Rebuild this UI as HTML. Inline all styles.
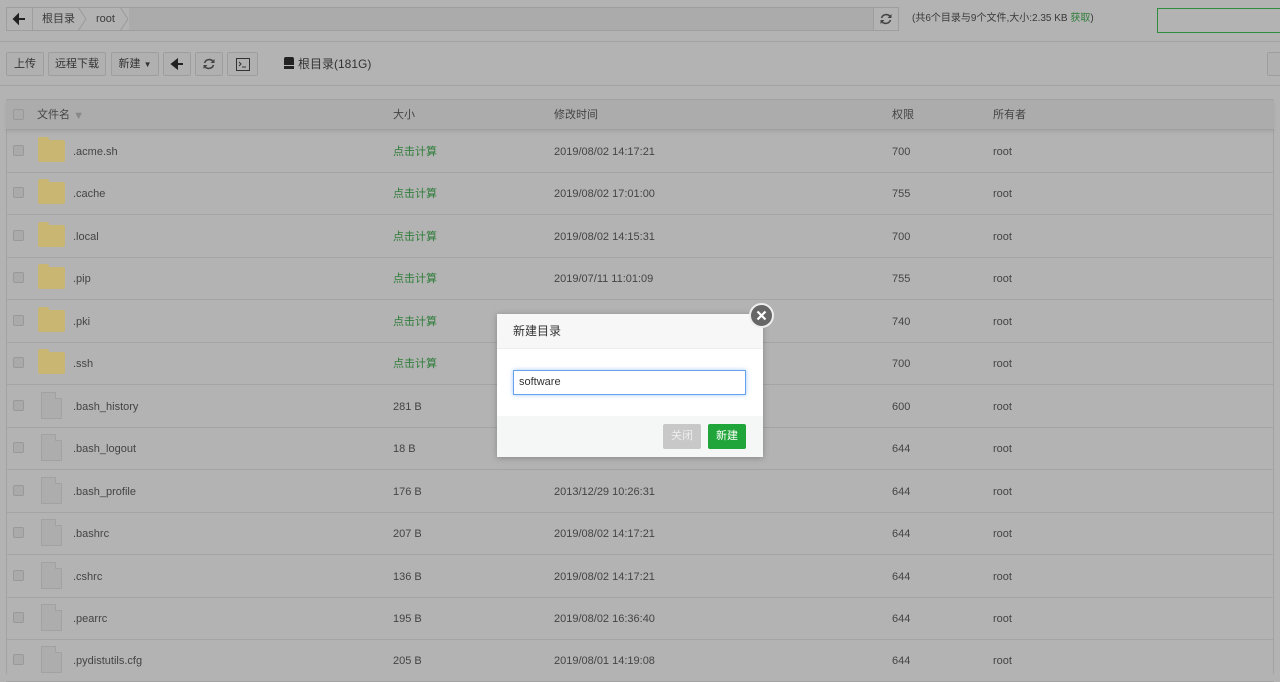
<!DOCTYPE html>
<html style="background:#b3b3b3"><head><meta charset="utf-8">
<style>
*{box-sizing:border-box;margin:0;padding:0}
body{width:1280px;height:674px;overflow:hidden;background:#b3b3b3;font-family:"Liberation Sans","Noto Sans CJK SC",sans-serif;font-size:12px;color:#3a3a3a;position:relative}
.abs{position:absolute}
.btn{position:absolute;top:52px;height:24px;border:1px solid #9e9e9e;border-radius:2px;background:#b0b0b0;font-size:11px;line-height:22px;text-align:center;color:#333}
.hl{position:absolute;left:0;width:1280px;height:1px;background:#a2a2a2}
.row{position:absolute;left:6px;width:1268px;height:43px;border-bottom:1px solid #a4a4a4}
.row span,.hd span{position:absolute;top:1px;line-height:42px;font-size:11px;color:#444}
.cb{position:absolute;left:7px;top:15px;width:11px;height:11px;border:1px solid #999;border-radius:2px;background:#aaa}
.fold{position:absolute;left:32px;top:10px;width:27px;height:22px;background:#c9b673;border-radius:2px}
.fold:before{content:"";position:absolute;left:0;top:-3px;width:11px;height:4px;background:#c9b673;border-radius:2px 2px 0 0}
.file{position:absolute;left:35px;top:7px;width:21px;height:27px;background:#adadad;border:1px solid #a2a2a2}
.file:after{content:"";position:absolute;right:-1px;top:-1px;width:6px;height:6px;background:#b3b3b3;border-left:1px solid #a2a2a2;border-bottom:1px solid #a2a2a2}
.g{color:#2f7d3a!important}
</style></head><body>
<div class="abs" style="left:6px;top:7px;width:893px;height:24px;border:1px solid #9e9e9e;background:#ababab"></div>
<div class="abs" style="left:6px;top:7px;width:27px;height:24px;border:1px solid #9e9e9e;background:#b3b3b3"><svg width="25" height="22"><path d="M7 11h11M7 11l4-4v8z" stroke="#222" stroke-width="2" fill="#222"/></svg></div>
<div class="abs" style="left:33px;top:8px;width:96px;height:22px;background:#b3b3b3"></div>
<div class="abs" style="left:42px;top:8px;line-height:22px;font-size:11px">根目录</div>
<svg class="abs" style="left:78px;top:7px" width="50" height="24"><path d="M0 0 L8 12 L0 24" fill="none" stroke="#9a9a9a"/><path d="M42 0 L50 12 L42 24" fill="none" stroke="#9a9a9a"/></svg>
<div class="abs" style="left:96px;top:8px;line-height:22px;font-size:11px">root</div>
<div class="abs" style="left:873px;top:7px;width:26px;height:24px;border:1px solid #9e9e9e;background:#b3b3b3;text-align:center"><svg width="14" height="14" style="margin-top:4px"><path d="M11.5 5A5 5 0 0 0 2.5 6M2.5 9A5 5 0 0 0 11.5 8" fill="none" stroke="#444" stroke-width="1.6"/><path d="M12.5 2v4h-4zM1.5 12V8h4z" fill="#444"/></svg></div>
<div class="abs" style="left:912px;top:8px;line-height:22px;font-size:10px;color:#3a3a3a">(共6个目录与9个文件,大小:2.35 KB <span style="color:#2f7d3a">获取</span>)</div>
<div class="abs" style="left:1157px;top:8px;width:130px;height:25px;border:1px solid #2f8d3f"></div>
<div class="hl" style="top:41px"></div>
<div class="btn" style="left:6px;width:38px">上传</div>
<div class="btn" style="left:48px;width:58px">远程下载</div>
<div class="btn" style="left:111px;width:48px">新建 <span style="font-size:8px">▼</span></div>
<div class="btn" style="left:163px;width:28px"><svg width="14" height="12" style="margin-top:5px"><path d="M3 6h10M2 6l5-4v8z" stroke="#222" stroke-width="2" fill="#222"/></svg></div>
<div class="btn" style="left:195px;width:28px"><svg width="14" height="14" style="margin-top:4px"><path d="M11.5 5A5 5 0 0 0 2.5 6M2.5 9A5 5 0 0 0 11.5 8" fill="none" stroke="#444" stroke-width="1.6"/><path d="M12.5 2v4h-4zM1.5 12V8h4z" fill="#444"/></svg></div>
<div class="btn" style="left:227px;width:31px"><svg width="14" height="13" style="margin-top:5px"><rect x="0.5" y="0.5" width="13" height="12" fill="none" stroke="#333"/><path d="M3 4l2 2-2 2M6 9h4" fill="none" stroke="#333"/></svg></div>
<div class="abs" style="left:284px;top:57px;width:10px;height:8px;background:#222;border-radius:2px 2px 0 0"></div>
<div class="abs" style="left:284px;top:66px;width:10px;height:3px;background:#222"></div>
<div class="abs" style="left:298px;top:55px;line-height:18px;font-size:12px;color:#333">根目录(181G)</div>
<div class="btn" style="left:1267px;width:20px"></div>
<div class="hl" style="top:85px"></div>
<div class="abs" style="left:6px;top:99px;width:1268px;height:575px;border:1px solid #a2a2a2;border-bottom:none"></div>
<div class="abs hd" style="left:6px;top:100px;width:1268px;height:30px;background:#acacac;border-bottom:1px solid #9e9e9e;box-shadow:0 2px 3px rgba(0,0,0,.08)">
<div class="cb" style="top:9px"></div>
<span style="left:31px;top:0;line-height:30px">文件名 <span style="position:relative;color:#888;line-height:30px">&#9660;</span></span>
<span style="left:387px;top:0;line-height:30px">大小</span>
<span style="left:548px;top:0;line-height:30px">修改时间</span>
<span style="left:886px;top:0;line-height:30px">权限</span>
<span style="left:987px;top:0;line-height:30px">所有者</span>
</div>
<div id="rows"></div>
<script>
var d=[["f",".acme.sh","点击计算","2019/08/02 14:17:21","700"],["f",".cache","点击计算","2019/08/02 17:01:00","755"],["f",".local","点击计算","2019/08/02 14:15:31","700"],["f",".pip","点击计算","2019/07/11 11:01:09","755"],["f",".pki","点击计算","2019/08/02 14:15:31","740"],["f",".ssh","点击计算","2019/08/02 14:15:31","700"],["d",".bash_history","281 B","2019/08/02 14:17:21","600"],["d",".bash_logout","18 B","2013/12/29 10:26:31","644"],["d",".bash_profile","176 B","2013/12/29 10:26:31","644"],["d",".bashrc","207 B","2019/08/02 14:17:21","644"],["d",".cshrc","136 B","2019/08/02 14:17:21","644"],["d",".pearrc","195 B","2019/08/02 16:36:40","644"],["d",".pydistutils.cfg","205 B","2019/08/01 14:19:08","644"]];
var h="";d.forEach(function(r,i){var t=130+Math.round(i*42.45);
h+='<div class="row" style="top:'+t+'px"><div class="cb"></div><div class="'+(r[0]=="f"?"fold":"file")+'"></div><span style="left:67px">'+r[1]+'</span><span style="left:387px" class="'+(r[0]=="f"?"g":"")+'">'+r[2]+'</span><span style="left:548px">'+r[3]+'</span><span style="left:886px">'+r[4]+'</span><span style="left:987px">root</span></div>';});
document.getElementById("rows").innerHTML=h;
</script>
<div class="abs" style="left:497px;top:314px;width:266px;height:143px;background:#fff;box-shadow:0 1px 6px rgba(0,0,0,.25)">
<div style="height:35px;background:#f7f7f7;border-bottom:1px solid #eee;padding-left:16px;line-height:34px;font-size:12px;color:#333">新建目录</div>
<div style="position:absolute;left:16px;top:56px;width:233px;height:25px;border:1px solid #66a3ee;box-shadow:0 0 4px rgba(102,163,238,.6);padding-left:5px;line-height:23px;font-size:11px;color:#333">software</div>
<div style="position:absolute;left:0;top:102px;width:266px;height:41px;background:#f5f6f6"></div>
<div style="position:absolute;left:166px;top:110px;width:38px;height:25px;background:#c8c8c8;border-radius:2px;color:#eee;font-size:11px;text-align:center;line-height:25px">关闭</div>
<div style="position:absolute;left:211px;top:110px;width:38px;height:25px;background:#20a53a;border-radius:2px;color:#fff;font-size:11px;text-align:center;line-height:25px">新建</div>
</div>
<div class="abs" style="left:749px;top:303px;width:25px;height:25px;border-radius:50%;background:#666;border:2px solid #eee"><svg width="21" height="21"><path d="M6.5 6.5l8 8M14.5 6.5l-8 8" stroke="#fff" stroke-width="2.2"/></svg></div>
</body></html>
